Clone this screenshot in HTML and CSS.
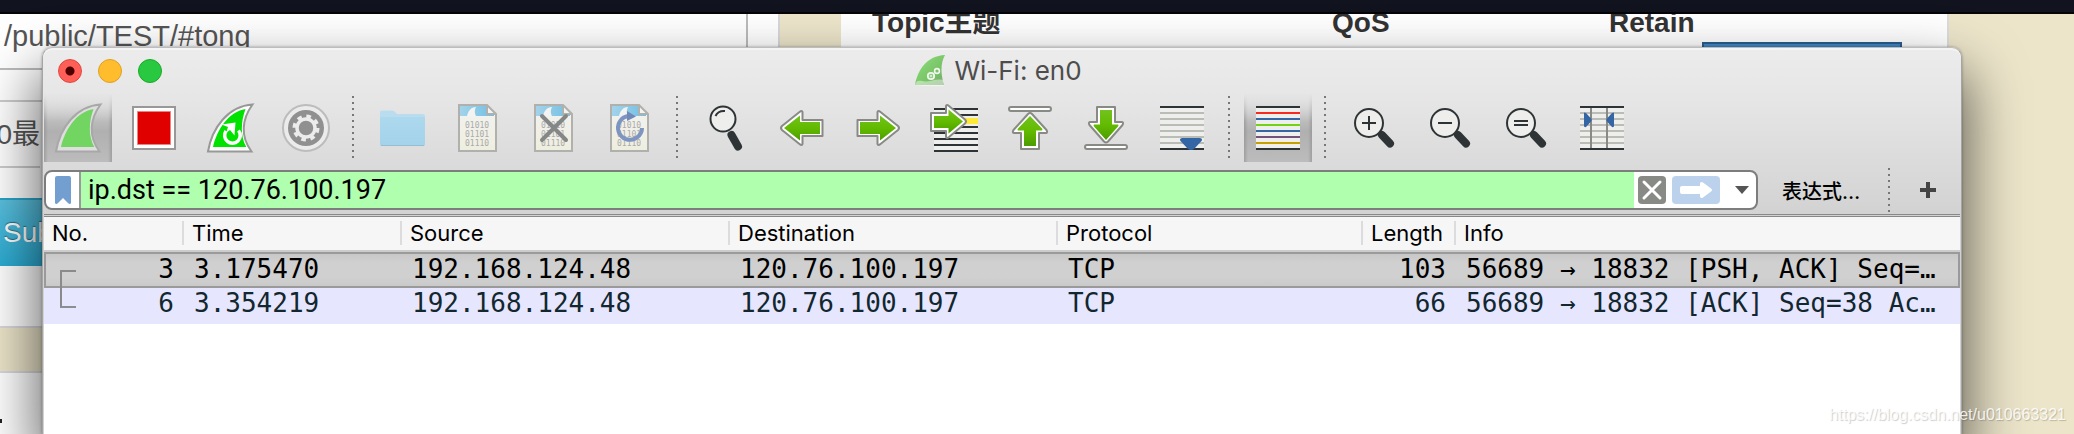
FILE: index.html
```html
<!DOCTYPE html>
<html lang="zh-CN">
<head>
<meta charset="utf-8">
<title>Wi-Fi: en0</title>
<link rel="stylesheet" href="styles.css">
</head>
<body>
<svg class="defs" aria-hidden="true">
  <defs>
    <linearGradient id="g-green" x1="0" y1="0" x2="0" y2="1"><stop offset="0" stop-color="#73c21f"/><stop offset=".5" stop-color="#62bb00"/><stop offset="1" stop-color="#4c9c00"/></linearGradient>
    <linearGradient id="g-sky" x1="0" y1="0" x2="1" y2="0"><stop offset="0" stop-color="#a3d3ea"/><stop offset="1" stop-color="#72bfe3"/></linearGradient>
    <linearGradient id="g-folder" x1="0" y1="0" x2="0" y2="1"><stop offset="0" stop-color="#add9ee"/><stop offset="1" stop-color="#a3d2ea"/></linearGradient>
    <linearGradient id="g-paper" x1="0" y1="0" x2="0" y2="1"><stop offset="0" stop-color="#f3f3f2"/><stop offset="1" stop-color="#eeeedf"/></linearGradient>
    <linearGradient id="g-fin" x1="0" y1="0" x2="1" y2="1"><stop offset="0" stop-color="#8fe07c"/><stop offset=".6" stop-color="#79c468"/><stop offset="1" stop-color="#77a86f"/></linearGradient>
    <g id="doc">
      <path d="M15 11H43L52 20V57H15Z" fill="url(#g-paper)"/>
      <path d="M16 12H43L50 19V22H16Z" fill="url(#g-sky)"/>
      <path d="M23 22C24 17 27 13 32 13C30 17 31 20 32 22Z" fill="#f3f3f2"/>
      <path d="M43 11V20H52Z" fill="#f3f3f2"/>
      <path d="M15 11H43L52 20V57H15ZM43 11V20H52" fill="none" stroke="#b0b1ac" stroke-width="2"/>
      <g class="bits"><text x="21" y="34">01010</text><text x="21" y="43">01101</text><text x="21" y="52">01110</text></g>
    </g>
    <path id="fin-outer" d="M12 57.5C16 34 32 12 56.5 10.5C46 25 44 42 55.5 57.5Z"/>
    <path id="fin-inner" d="M17 53C21 36 32 18 49.500 15C45 27 44 42 50.300 53Z"/>
    <g id="lens"><path d="M42 41L50 49.500" stroke="#2e3436" stroke-width="8" stroke-linecap="round"/><circle cx="29" cy="29" r="14" fill="#eeeeec" stroke="#2e3436" stroke-width="2"/></g>
    <g id="arrow-r" stroke-linejoin="round">
      <path d="M13.500 26H33.500V18Q34 16 36.500 18L54 32Q56 34 54 36L36.500 50Q34 52 33.500 50V42H13.500Z" fill="#fff" stroke="#888a85" stroke-width="2"/>
      <path d="M16 28H36V21.500L52 34L36 46.500V40H16Z" fill="url(#g-green)"/>
    </g>
  </defs>
</svg>

<div class="desktop">
  <div class="menubar"></div>
  <div class="pages">
    <div class="left-col">
      <section class="sheet">
        <div class="topic-field">/public/TEST/#tong</div>
        <div class="gap-row"></div>
        <div class="qos-row"><span>0最</span></div>
        <div class="pad-row"></div>
        <button class="subscribe" type="button">Sub</button>
      </section>
      <section class="sheet lower"><i class="speck"></i></section>
    </div>
    <section class="right-sheet">
      <div class="heads"><b>Topic主题</b><b>QoS</b><b>Retain</b></div>
      <div class="blue-button"></div>
    </section>
  </div>
</div>

<main class="window">
  <header class="titlebar">
    <div class="lights"><button class="light red" aria-label="Close"></button><button class="light amber" aria-label="Minimize"></button><button class="light green" aria-label="Zoom"></button></div>
    <h1 class="title">
      <svg width="32" height="32" viewBox="0 0 32 32"><path d="M1 30C4 14 13 1 31 0C26 9 27 20 30 30Z" fill="url(#g-fin)"/><path d="M1 30C2 26 4 25 8 26C15 28 21 23 29 25L30 31Q14 32 1 30Z" fill="#fff" opacity=".45"/><g fill="none" stroke="#eef7ec"><circle cx="17" cy="21" r="3.200" stroke-width="1.800"/><circle cx="17" cy="21" r="1"/><circle cx="23" cy="16" r="2.400" stroke-width="1.600"/></g></svg>
      <span>Wi-Fi: en0</span>
    </h1>
    <div class="lights-balance"></div>
  </header>

  <nav class="toolbar">
    <button class="tool pressed" aria-label="Start"><svg viewBox="0 0 68 68"><use href="#fin-outer" fill="#dedede" stroke="#a8a8a8" stroke-width="2"/><use href="#fin-inner" fill="#72d562"/></svg></button>
    <button class="tool" aria-label="Stop"><svg viewBox="0 0 68 68"><path d="M13 13H55V55H13Z" fill="#fff" stroke="#989898" stroke-width="2"/><path d="M17.500 17.500H50.500V50.500H17.500Z" fill="#e00000" stroke="#f08080"/></svg></button>
    <button class="tool" aria-label="Restart"><svg viewBox="0 0 68 68"><use href="#fin-outer" fill="#fff" stroke="#989898" stroke-width="2"/><use href="#fin-inner" fill="#00e200"/><path d="M42.500 36.500A7.800 7.800 0 1 1 30 37" fill="none" stroke="#fff" stroke-width="3.500"/><path d="M25.500 30.500L39.500 28.500L38.500 41.500L34 36L30 39L32 33Z" fill="#fff"/></svg></button>
    <button class="tool" aria-label="Options"><svg viewBox="0 0 68 68"><circle cx="34" cy="34" r="23" fill="#ebebeb" stroke="#bcbcbc" stroke-width="2"/><circle cx="34" cy="34" r="18" fill="#909090"/><circle cx="34" cy="34" r="9" fill="none" stroke="#ececec" stroke-width="3.500"/><circle cx="34" cy="34" r="11.500" fill="none" stroke="#ececec" stroke-width="4" stroke-dasharray="4.500 4.532"/></svg></button>
    <i class="sep"></i>
    <button class="tool" aria-label="Open"><svg viewBox="0 0 68 68"><path d="M12 20V18Q12 16.500 14 16.500H24Q26 16.500 27 18L29 20H54Q57 20 57 22V50Q57 52 55 52H14Q12 52 12 50Z" fill="#b9ddef"/><path d="M12 23H57V50Q57 52 55 52H14Q12 52 12 50Z" fill="url(#g-folder)"/><path d="M13 51.500H56" stroke="#94bed3"/></svg></button>
    <button class="tool" aria-label="Save"><svg viewBox="0 0 68 68"><use href="#doc"/></svg></button>
    <button class="tool" aria-label="Close file"><svg viewBox="0 0 68 68"><use href="#doc"/><path d="M22 22L46 46M46 22L22 46" stroke="#858786" stroke-width="4" stroke-linecap="round"/></svg></button>
    <button class="tool" aria-label="Reload"><svg viewBox="0 0 68 68"><use href="#doc"/><path d="M32 22A12 12 0 1 0 46 34" fill="none" stroke="#7d95c0" stroke-width="4"/><path d="M31 17L40 22.500L31 27Z" fill="#7189b8"/></svg></button>
    <i class="sep"></i>
    <button class="tool" aria-label="Find"><svg viewBox="0 0 68 68"><path d="M39.500 41L46 52.500" stroke="#2e3436" stroke-width="8" stroke-linecap="round"/><circle cx="31" cy="25" r="12.500" fill="#eeeeec" stroke="#2e3436" stroke-width="2"/><path d="M23.500 22Q26 16.500 33 17" fill="none" stroke="#2e3436" stroke-width="2"/></svg></button>
    <button class="tool" aria-label="Back"><svg viewBox="0 0 68 68"><use href="#arrow-r" transform="matrix(-1 0 0 1 68 0)"/></svg></button>
    <button class="tool" aria-label="Forward"><svg viewBox="0 0 68 68"><use href="#arrow-r"/></svg></button>
    <button class="tool" aria-label="Go to packet"><svg viewBox="0 0 68 68"><path d="M14 14H58V58H14Z" fill="#eeeeec"/><path d="M14 27H58" stroke="#fce93a" stroke-width="6"/><path d="M14 15H58M14 21H58M14 33H58M14 39H58M14 45H58M14 51H58M14 57H58" stroke="#2e3436" stroke-width="2"/><path d="M11 19H26V12Q26.500 10 29 12L45 25.500Q47 27.500 45 29.500L29 43Q26.500 45 26 43V37H11Z" fill="#fff" stroke="#888a85" stroke-width="2" stroke-linejoin="round"/><path d="M14 22H28.500V15.500L43 27.500L28.500 39.500V34H14Z" fill="url(#g-green)"/></svg></button>
    <button class="tool" aria-label="First packet"><svg viewBox="0 0 68 68"><rect x="13" y="13" width="42" height="4" rx="2" fill="#fff" stroke="#888a85" stroke-width="2"/><path d="M25 55V39H18Q16 38.500 17.500 36L32 20Q34 18 36 20L50.500 36Q52 38.500 50 39H43V55Z" fill="#fff" stroke="#888a85" stroke-width="2" stroke-linejoin="round"/><path d="M28 52V36.500H22Q21 36 22 34.500L34 22L46 34.500Q47 36 46 36.500H40V52Z" fill="url(#g-green)"/></svg></button>
    <button class="tool" aria-label="Last packet"><svg viewBox="0 0 68 68"><path d="M25 13V28H18Q16 28.500 17.500 31L32 47.500Q34 49.500 36 47.500L50.500 31Q52 28.500 50 28H43V13Z" fill="#fff" stroke="#888a85" stroke-width="2" stroke-linejoin="round"/><path d="M28 16V30.500H22Q21 31 22 32.500L34 46L46 32.500Q47 31 46 30.500H40V16Z" fill="url(#g-green)"/><rect x="13" y="51" width="42" height="4" rx="2" fill="#fff" stroke="#888a85" stroke-width="2"/></svg></button>
    <button class="tool" aria-label="Auto scroll"><svg viewBox="0 0 68 68"><path d="M12 12H56V56H12Z" fill="#eeeeec"/><path d="M12 19H56M12 25H56M12 31H56M12 37H56M12 43H56M12 49H56" stroke="#babdb6" stroke-width="2"/><path d="M12 13H56M12 55H56" stroke="#2e3436" stroke-width="2"/><path d="M34 44H52Q55 44.500 53.500 47L46 55Q43 57 40 55L32.500 47Q31 44.500 34 44Z" fill="#3465a4"/></svg></button>
    <i class="sep"></i>
    <button class="tool pressed" aria-label="Colorize"><svg viewBox="0 0 68 68"><path d="M12 12H56V56H12Z" fill="#eeeeec"/><g stroke-width="2"><path d="M12 13H56M12 55H56" stroke="#2e3436"/><path d="M12 19H56" stroke="#f82a20"/><path d="M12 25H56M12 37H56" stroke="#3465a4"/><path d="M12 31H56" stroke="#73d216"/><path d="M12 43H56" stroke="#75507b"/><path d="M12 49H56" stroke="#c4a000"/></g></svg></button>
    <i class="sep"></i>
    <button class="tool" aria-label="Zoom in"><svg viewBox="0 0 68 68"><use href="#lens"/><path d="M22 29H36M29 22V36" stroke="#2e3436" stroke-width="2"/></svg></button>
    <button class="tool" aria-label="Zoom out"><svg viewBox="0 0 68 68"><use href="#lens"/><path d="M22 29H36" stroke="#2e3436" stroke-width="2"/></svg></button>
    <button class="tool" aria-label="Normal size"><svg viewBox="0 0 68 68"><use href="#lens"/><path d="M22 27H36M22 31H36" stroke="#2e3436" stroke-width="2"/></svg></button>
    <button class="tool" aria-label="Resize columns"><svg viewBox="0 0 68 68"><path d="M12 12H56V56H12Z" fill="#eeeeec"/><path d="M12 19H56M12 25H56M12 31H56M12 37H56M12 43H56M12 49H56" stroke="#babdb6" stroke-width="2"/><path d="M12 13H56M12 55H56" stroke="#2e3436" stroke-width="2"/><path d="M23 14V54M39 14V54" stroke="#888a85" stroke-width="2"/><path d="M16 19Q16 18 18 19L23 24.500Q24.500 26 23 27.500L18 33Q16 33.500 16 32ZM46 19Q46 18 44 19L39 24.500Q37.500 26 39 27.500L44 33Q46 33.500 46 32Z" fill="#3465a4"/></svg></button>
  </nav>

  <form class="filterbar">
    <div class="filter">
      <button type="button" class="bookmark" aria-label="Bookmark"><svg width="16" height="28" viewBox="0 0 16 28"><path d="M0 2Q0 0 2 0H14Q16 0 16 2V27Q15 29 13 27L8 22L3 27Q1 29 0 27Z" fill="#729fcf"/></svg></button>
      <input class="query" type="text" aria-label="Display filter" value="ip.dst == 120.76.100.197">
      <button type="button" class="icon-btn clear" aria-label="Clear"><svg width="28" height="28" viewBox="0 0 28 28"><path d="M6 6L22 22M22 6L6 22" stroke="#fff" stroke-width="3" stroke-linecap="round"/></svg></button>
      <button type="button" class="icon-btn apply" aria-label="Apply"><svg width="48" height="28" viewBox="0 0 48 28"><path d="M10 10H28V8Q28 5 31 6.500L39 12.500Q41 14 39 15.500L31 21.500Q28 23 28 20V18H10Q8 18 8 16V12Q8 10 10 10Z" fill="#fff"/></svg></button>
      <button type="button" class="caret" aria-label="History"><svg width="14" height="8" viewBox="0 0 14 8"><path d="M0 0H14L7 8Z" fill="#555"/></svg></button>
    </div>
    <button type="button" class="expression">表达式…</button>
    <i class="sep"></i>
    <button type="button" class="plus" aria-label="Add"><svg width="16" height="16" viewBox="0 0 16 16"><path d="M0 8H16M8 0V16" stroke="#444" stroke-width="4"/></svg></button>
  </form>

  <div class="pane">
  <table class="packets">
    <colgroup><col class="c-no"><col class="c-time"><col class="c-addr"><col class="c-addr"><col class="c-proto"><col class="c-len"><col></colgroup>
    <thead><tr><th><span>No.</span></th><th><span>Time</span></th><th><span>Source</span></th><th><span>Destination</span></th><th><span>Protocol</span></th><th><span>Length</span></th><th><span>Info</span></th></tr></thead>
    <tbody>
      <tr class="selected"><td class="num"><i class="link-start"></i>3</td><td>3.175470</td><td>192.168.124.48</td><td>120.76.100.197</td><td>TCP</td><td class="num">103</td><td>56689 → 18832 [PSH, ACK] Seq=…</td></tr>
      <tr class="related"><td class="num"><i class="link-end"></i>6</td><td>3.354219</td><td>192.168.124.48</td><td>120.76.100.197</td><td>TCP</td><td class="num">66</td><td>56689 → 18832 [ACK] Seq=38 Ac…</td></tr>
    </tbody>
  </table>
  </div>
</main>
<div class="watermark">https://blog.csdn.net/u010663321</div>
</body>
</html>
```
FILE: styles.css
```css
* { box-sizing: border-box; }
body {
  position: relative;
  min-height: 100vh;
  margin: 0;
  overflow: hidden;
  background: #ece5ca;
  font-family: Inter, "Noto Sans CJK SC", sans-serif;
}
button { padding: 0; border: 0; background: none; font: inherit; color: inherit; }
svg { display: block; }
.defs { position: absolute; width: 0; height: 0; }
.bits { font: 8px "DejaVu Sans Mono", monospace; fill: #aaa; }

/* Desktop behind the window */
.desktop { font-family: "Liberation Sans", "Noto Sans CJK SC", sans-serif; font-size: 28px; color: #555; }
.menubar { position: relative; z-index: 1; height: 14px; background: #11131f; border-bottom: 2px solid #050507; }
.pages { display: flex; align-items: flex-start; }
.left-col { width: 780px; }
.sheet { background: #fff; border: 2px solid #d8d8dc; border-width: 0 2px 2px 0; }
.topic-field { height: 56px; width: 748px; padding-left: 4px; font-size: 29px; line-height: 45px; border-right: 2px solid #bbb; border-bottom: 2px solid #bbb; }
.gap-row { height: 32px; border-bottom: 2px solid #ccc; }
.qos-row { display: flex; justify-content: flex-end; width: 40px; height: 66px; line-height: 66px; white-space: nowrap; border-bottom: 2px solid #ccc; }
.pad-row { height: 30px; }
.subscribe { display: block; width: 160px; height: 68px; padding-left: 3px; text-align: left; color: #fff; text-shadow: 0 -1px 1px #0006; background: linear-gradient(#5bc0de, #2aabd2); border-top: 2px solid #28a4c9; }
.sheet:first-child { height: 314px; }
.sheet.lower { margin-top: 43px; height: 63px; padding-top: 46px; border-top: 2px solid #d8d8dc; border-bottom: 0; }
.speck { display: block; width: 2px; height: 4px; background: #222; }
.right-sheet { flex: 1; margin: 0 125px 0 61px; height: 300px; padding-left: 31px; background: #fff; border-right: 2px solid #dcdcdc; }
.heads { display: grid; grid-template-columns: 460px 277px 1fr; height: 28px; line-height: 17px; color: #333; }
.blue-button { width: 200px; height: 40px; margin-left: 830px; background: #428bca; border: 2px solid #285e8e; }

/* Window */
.window {
  position: absolute;
  inset: 47px 112px 0 42px;
  z-index: 2;
  display: flex;
  flex-direction: column;
  padding: 0 1px;
  border: 1px solid #a5a5a5;
  border-top-color: #bdbdbd;
  border-bottom: 0;
  border-radius: 10px 10px 0 0;
  background: linear-gradient(#ececec 0, #e6e6e6 50px, #d2d2d2 167px);
  box-shadow: inset 0 2px 0 #f4f4f4, 0 0 3px #0005, 0 30px 56px 6px #0009;
}
.titlebar { display: flex; align-items: center; justify-content: space-between; height: 46px; padding: 0 22px 0 14px; }
.lights, .lights-balance { display: flex; gap: 16px; width: 112px; }
.light { width: 24px; height: 24px; border-radius: 50%; }
.red { background: radial-gradient(circle, #4d0000 0 4px, #ff5f57 5px); border: 1px solid #e0443e; }
.amber { background: #ffbd2e; border: 1px solid #dea123; }
.green { background: #28c840; border: 1px solid #1aab29; }
.title { display: flex; align-items: center; gap: 8px; margin: 0; font-size: 26px; font-weight: 400; line-height: 32px; color: #4d4d4d; }

.toolbar { display: flex; gap: 8px; height: 68px; }
.tool { flex: none; width: 68px; height: 68px; }
.tool svg { width: 68px; height: 68px; }
.pressed {
  background:
    linear-gradient(#e5e5e5, #e5e5e500 40%),
    linear-gradient(90deg, #8888 0, #8880 4px calc(100% - 4px), #8888 100%),
    linear-gradient(#dcdcdc, #b0b0b0 55%, #bcbcbc);
}
.sep { flex: none; width: 12px; margin: 2px 0 4px; background: repeating-linear-gradient(#777 0 2px, transparent 2px 6px) 4px 0 / 2px 100% no-repeat; }

.filterbar { display: flex; align-items: center; flex: none; margin: 0; height: 52px; padding-top: 4px; }
.filter { display: flex; align-items: center; flex: 1; height: 40px; border: 2px solid #7d7d7d; border-radius: 8px; background: #fff; overflow: hidden; }
.bookmark { display: flex; align-items: center; justify-content: center; width: 35px; height: 36px; border-right: 2px solid #999; }
.query { flex: 1; min-width: 0; height: 36px; padding: 0 7px; border: 0; outline: 0; background: #afffaf; color: #000; font: 27px Roboto, sans-serif; }
.icon-btn { height: 28px; border-radius: 4px; }
.clear { width: 28px; margin-left: 4px; background: #888a85; }
.apply { width: 48px; margin-left: 6px; background: #bcd2ec; }
.caret { display: flex; justify-content: center; width: 36px; }
.caret svg { margin-left: 8px; }
.expression { width: 126px; font: 500 20px Inter, "Noto Sans CJK SC", sans-serif; color: #000; }
.filterbar .sep { height: 44px; margin: 0; }
.plus { width: 64px; display: flex; justify-content: center; }

/* Packet list */
.pane { flex: 1; padding-top: 1px; border-top: 1px solid #888; background: linear-gradient(#d2d2d2 1px, #fff 1px); }
.packets { width: 100%; table-layout: fixed; border-collapse: separate; border-spacing: 0; border-top: 1px solid #888; }
.c-no { width: 140px; }
.c-time { width: 218px; }
.c-addr { width: 328px; }
.c-proto { width: 305px; }
.c-len { width: 93px; }
th { height: 35px; padding: 1px 0 3px; text-align: left; font-size: 22px; font-weight: 400; line-height: 24px; background: #f6f6f6; border-bottom: 2px solid #ccc; }
th span { display: block; padding-left: 8px; border-right: 2px solid #dcdcdc; }
th:last-child span { border-right: 0; }
td { position: relative; padding: 0 0 2px 10px; font: 26px/34px "DejaVu Sans Mono", monospace; color: #000; white-space: nowrap; overflow: hidden; }
.num { padding-right: 10px; text-align: right; }
.selected td { background: linear-gradient(#c6c6c6, #d0d0d0 30% 70%, #c8c8c8); box-shadow: inset 0 2px #9a9a9a, inset 0 -2px #9a9a9a; }
.selected td:first-child { box-shadow: inset 2px 2px #9a9a9a, inset 0 -2px #9a9a9a; }
.selected td:last-child { box-shadow: inset -2px 2px #9a9a9a, inset 0 -2px #9a9a9a; }
.related td { padding-bottom: 6px; line-height: 30px; color: #12272e; background: #e7e6ff; }
.link-start, .link-end { position: absolute; left: 16px; width: 16px; border-left: 2px solid #8a8a8a; }
.link-start { top: 18px; bottom: 0; border-top: 2px solid #8a8a8a; }
.link-end { top: 0; height: 20px; border-bottom: 2px solid #8a8f96; }

.watermark { position: absolute; right: 8px; bottom: 8px; z-index: 3; font: 16px/22px "Liberation Sans", sans-serif; color: #ffffffd9; text-shadow: 1px 1px 1px #0003; }
```
